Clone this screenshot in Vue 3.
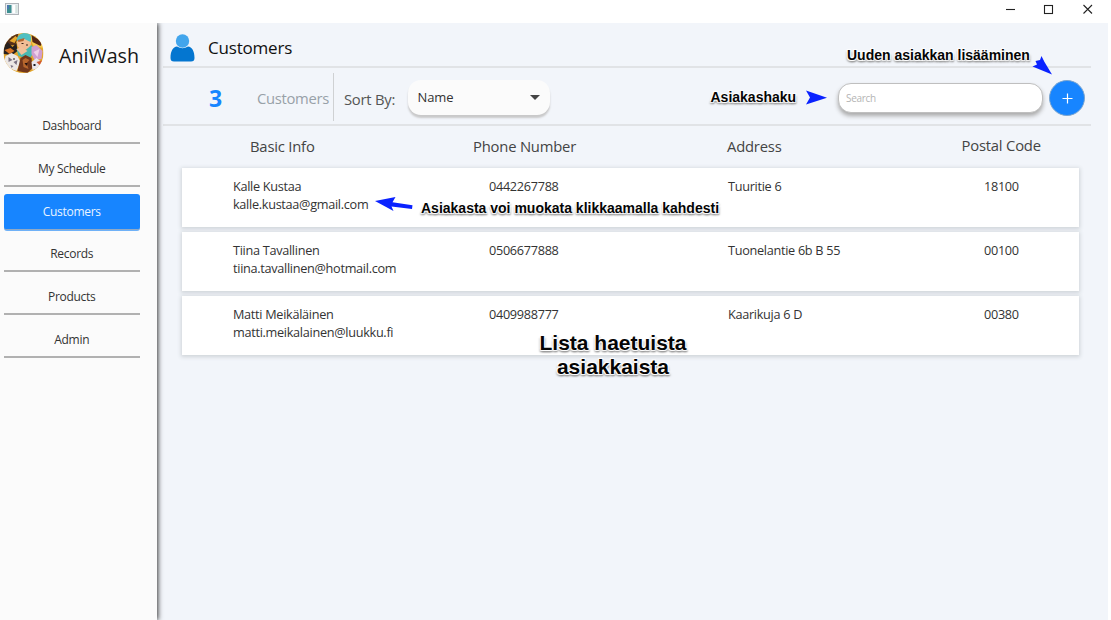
<script setup>
const menu = ['Dashboard', 'My Schedule', 'Customers', 'Records', 'Products', 'Admin']
const customers = [
  { name: 'Kalle Kustaa', mail: 'kalle.kustaa@gmail.com', phone: '0442267788', address: 'Tuuritie 6', zip: '18100' },
  { name: 'Tiina Tavallinen', mail: 'tiina.tavallinen@hotmail.com', phone: '0506677888', address: 'Tuonelantie 6b B 55', zip: '00100' },
  { name: 'Matti Meikäläinen', mail: 'matti.meikalainen@luukku.fi', phone: '0409988777', address: 'Kaarikuja 6 D', zip: '00380' },
]
</script>

<template>
  <div class="window">
    <header class="titlebar">
      <svg class="app-icon" width="14" height="12" viewBox="0 0 14 12">
        <rect x=".5" y=".5" width="13" height="11" fill="#e9eef2" stroke="#b0b5ba" />
        <rect x="2" y="2" width="4.5" height="8" fill="#3d8f91" />
        <rect x="2" y="2" width="2" height="4" fill="#4c79ae" />
        <rect x="7.5" y="2" width="2.5" height="8" fill="#fff" />
        <rect x="10.5" y="2" width="2" height="8" fill="#d5e4df" />
      </svg>
      <svg class="controls" width="90" height="14" viewBox="0 0 90 14" fill="none" stroke="#222" stroke-width="1.1">
        <path d="M1 6.5H10" />
        <rect x="39.5" y="2.5" width="8" height="8" />
        <path d="M78.500 2L87 10.500M87 2L78.500 10.500" />
      </svg>
    </header>

    <div class="body">
      <aside class="sidebar">
        <div class="brand">
          <svg width="41" height="40" viewBox="0 0 40 40">
            <defs><clipPath id="round"><circle cx="20" cy="20" r="20" /></clipPath></defs>
            <g clip-path="url(#round)">
              <rect width="40" height="40" fill="#e2a52c" />
              <path d="M0 0H15L12 12L0 13Z" fill="#57301a" />
              <path d="M24 1L34 4L40 15L30 13Z" fill="#f4c84e" />
              <path d="M6 8L12 3L14 5L11 10Z" fill="#e8a92f" />
              <path d="M28 2L39 9L37 13L29 9Z" fill="#542616" />
              <ellipse cx="20.500" cy="10" rx="7" ry="7" fill="#f2bd95" />
              <path d="M13 7Q15-1 24 0Q29 2 27 9L21 6L14 8Z" fill="#4fc0c2" />
              <path d="M14 7L21 5L20 8L15 9Z" fill="#b5662f" />
              <path d="M18 10h2v1h-2zM23 11h1v2h-1z" fill="#382018" />
              <path d="M0 14L4 9L9 14L13 10L14 18L9 22L0 21Z" fill="#27201e" />
              <path d="M1 17L7 15L11 18L6 21Z" fill="#d97524" />
              <path d="M13 16L21 18L28 12L31 18L26 26L15 23Z" fill="#49b8b2" />
              <path d="M13 16L18 14L24 18L18 22Z" fill="#f2c19b" />
              <path d="M28 14L33 12L39 18L38 26L31 27L28 21Z" fill="#cf9ed0" />
              <path d="M30 19L36 16L34 24Z" fill="#eed0e8" />
              <path d="M2 23L8 20L14 23L17 29L13 38L5 35L1 28Z" fill="#ece7e4" />
              <path d="M5 24L9 27L5 29ZM10 29L14 27L13 32ZM7 32L10 33L8 35Z" fill="#7b7282" />
              <path d="M17 25L22 22L28 25L29 35L24 40L14 38Z" fill="#72371c" />
              <path d="M19 27L22 25L26 27L23 30L25 36L20 34Z" fill="#b8672d" />
              <path d="M21 30L24 30L23 33Z" fill="#23100d" />
              <path d="M28 29L33 25L38 29L35 35L29 37Z" fill="#e9e5ec" />
              <path d="M33 29L40 27L38 34Z" fill="#d1552f" />
              <path d="M30 31h2v2h-2zM10 25h1v2h-1z" fill="#1c1a20" />
            </g>
          </svg>
          <span class="brand-name">AniWash</span>
        </div>
        <nav>
          <a v-for="(item, i) in menu" :key="item" :class="{ active: i === 2 }">{{ item }}</a>
        </nav>
      </aside>

      <main>
        <div class="heading">
          <svg width="25" height="28" viewBox="0 0 25 28">
            <path d="M.5 24C.5 17 3 13 7 12.500Q12.500 16 18 12.500C22 13 24.500 17 24.500 24Q24.500 27.500 21 27.500H4Q.5 27.500 .5 24Z" fill="#0476d0" />
            <circle cx="12.500" cy="7" r="6.700" fill="#42a5ec" />
          </svg>
          <h1>Customers</h1>
        </div>
        <div class="toolbar">
          <strong>3</strong>
          <span class="count-label">Customers</span>
          <i class="separator"></i>
          <span class="sort-label">Sort By:</span>
          <div class="select"><span>Name</span><i></i></div>
          <div class="search">Search</div>
          <button class="add"><svg width="12" height="12" viewBox="0 0 12 12"><path d="M1.500 6.500H11.500M6.500 1.500V11.500" stroke="#fff" stroke-width="1.200" /></svg></button>
        </div>
        <div class="columns">
          <span class="c1">Basic Info</span>
          <span class="c2">Phone Number</span>
          <span class="c3">Address</span>
          <span class="c4">Postal Code</span>
        </div>
        <section class="list">
          <article v-for="c in customers" :key="c.name">
            <div class="info"><div class="name">{{ c.name }}</div><div class="mail">{{ c.mail }}</div></div>
            <span class="phone">{{ c.phone }}</span>
            <span class="address">{{ c.address }}</span>
            <span class="zip">{{ c.zip }}</span>
          </article>
        </section>
      </main>
    </div>

    <div class="note note-add">Uuden asiakkan lisääminen</div>
    <div class="note note-search">Asiakashaku</div>
    <div class="note note-edit">Asiakasta voi muokata klikkaamalla kahdesti</div>
    <div class="note note-list">Lista haetuista<br>asiakkaista</div>
    <svg class="arrows" width="1111" height="620" viewBox="0 0 1111 620" fill="#0a22ff">
      <path d="M1052 74.500L1032.500 66.500L1037 64.500L1035.500 61L1040 60L1041.500 56L1044.500 62Z" />
      <path d="M827 97.800L806 90.500L810 97.500L806 104.500Z" />
      <path d="M375 201L395.500 197L392.500 202.200L412.500 205.200L412 209L391.500 206.500L393.500 211Z" />
    </svg>
  </div>
</template>

<style>
html, body { margin: 0; background: #fff; overflow: hidden; }
</style>

<style scoped>
* { box-sizing: border-box; }
.window { position: relative; width: 1111px; height: 620px; overflow: hidden; background: #fff; font-family: "Open Sans", "Noto Sans", sans-serif; color: #333; }
.titlebar { height: 23px; display: flex; justify-content: space-between; padding: 3px 16px 0 5px; }
.body { display: flex; width: 1108px; height: 597px; background: #f2f5fa; }
.sidebar { width: 157px; background: #fbfbfb; box-shadow: 1px 0 5px #333; clip-path: inset(0 -8px 0 0); flex: none; }
.brand { display: flex; height: 80px; padding: 10px 0 0 3px; gap: 15px; }
.brand-name { font-size: 19.700px; line-height: 40px; color: #161616; white-space: nowrap; margin-top: 3px; }
nav { padding: 4.300px 0 0 3.500px; }
nav a { display: flex; align-items: center; justify-content: center; width: 136.500px; height: 37px; margin-bottom: 5.7px; padding-top: 2px; border-bottom: 2px solid #b1b1b1; font-size: 12px; letter-spacing: -.3px; }
nav a.active { height: 36px; margin-top: 6.7px; padding-top: 0; color: #e9f4ff; background: #1785ff; border-radius: 3px; border-bottom: 1px solid #8fa9c6; box-shadow: 0 1px 0 #6fb1f7; }
main { flex: 1; min-width: 0; padding-left: 6px; }
.heading { height: 45px; width: 928px; border-bottom: 2px solid #e1e3e6; display: flex; align-items: center; gap: 13px; padding: 7px 0 0 7px; }
h1 { margin: 0; font-size: 17px; line-height: 24px; font-weight: 400; letter-spacing: -.2px; color: #101010; }
.toolbar { height: 58px; width: 928px; border-bottom: 2px solid #e1e3e6; display: flex; align-items: center; padding-top: 4px; }
.toolbar strong { width: 94px; padding-left: 46px; font-size: 23px; line-height: 30px; color: #1785ff; }
.count-label { width: 76px; font-size: 14.800px; letter-spacing: -.3px; color: #98a1a8; white-space: nowrap; }
.separator { width: 1px; height: 48px; background: #cfd1d3; margin-top: -3px; }
.sort-label { width: 74px; padding: 1px 0 0 10px; font-size: 14.800px; letter-spacing: -.25px; color: #555; white-space: nowrap; }
.select { width: 142px; height: 35px; margin-top: -2px; border-radius: 13px; background: #fbfbfb; box-shadow: 0 3px 2px #c9c9ca; display: flex; align-items: center; justify-content: space-between; padding: 0 10px 0 9.500px; font-size: 13px; letter-spacing: -.1px; }
.select i { border: 5px solid transparent; border-top-color: #444; border-bottom: 0; }
.search { width: 205px; height: 30px; margin: -1px 6px 0 288px; border: 1px solid #bfbfbf; border-radius: 13px; background: #fff; box-shadow: 0 3px 4px #aaa; padding-left: 7px; line-height: 29px; font-size: 10px; letter-spacing: -.3px; color: #b4b4b4; }
.add { width: 36px; height: 36px; padding: 0; border: 1px solid #7aa5d0; border-radius: 50%; background: #1785ff; display: flex; align-items: center; justify-content: center; flex: none; margin-top: -1px; }
.columns { height: 42px; display: grid; grid-template-columns: 223px 254px 234.500px 1fr; padding: 10px 0 0 87px; font-size: 14.800px; letter-spacing: -.2px; line-height: 20px; color: #444; white-space: nowrap; }
.c4 { margin-top: -1px; }
.list { display: flex; flex-direction: column; gap: 5px; margin-left: 19px; width: 897px; }
article { height: 59px; background: #fff; box-shadow: 0 1px 4px 1px #cfd4d8; display: grid; grid-template-columns: 256px 239px 256px 1fr; padding: 9px 0 0 51px; font-size: 12.700px; letter-spacing: -.3px; line-height: 18px; white-space: nowrap; }
.note { position: absolute; font-family: "Liberation Sans", Arial, sans-serif; font-weight: 700; color: #050505; white-space: nowrap; text-shadow: -1px -1px 1px #fff, 1px -1px 1px #fff, -1px 1px 1px #fff, 1px 1px 1px #fff, 1px 2px 2px #777, -1px 2px 2px #999; font-size: 14px; line-height: 16px; }
.note-add { left: 847px; top: 47px; }
.note-search { left: 710.500px; top: 89px; }
.note-edit { left: 421px; top: 200px; }
.note-list { left: 513px; top: 331px; width: 200px; text-align: center; font-size: 21px; line-height: 24px; }
.arrows { position: absolute; left: 0; top: 0; pointer-events: none; }
</style>
